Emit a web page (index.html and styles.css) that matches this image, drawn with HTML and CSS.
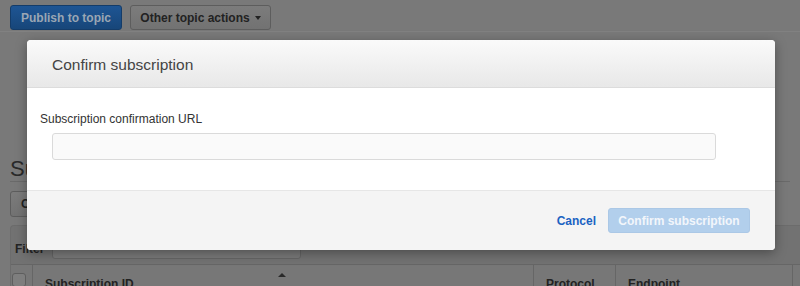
FILE: index.html
```html
<!DOCTYPE html>
<html>
<head>
<meta charset="utf-8">
<link rel="stylesheet" href="styles.css">
</head>
<body>
<div class="page">
  <div class="toolbar">
    <button class="btn btn-primary">Publish to topic</button>
    <button class="btn btn-default">Other topic actions <span class="caret"></span></button>
  </div>
  <div class="top-rule"></div>
  <h2 class="section-title">Subscriptions</h2>
  <div class="actions">
    <button class="btn btn-default">Create subscription</button>
  </div>
  <div class="panel">
    <div class="filter-row">
      <span class="filter-label">Filter</span>
      <span class="filter-input"></span>
    </div>
    <div class="table-head">
      <div class="th th-check"><span class="checkbox"></span></div>
      <div class="th th-id">Subscription ID<span class="sort"></span></div>
      <div class="th th-proto">Protocol</div>
      <div class="th th-end">Endpoint</div>
      <div class="th th-rest"></div>
    </div>
  </div>
</div>

<div class="modal">
  <div class="modal-header">
    <h3 class="modal-title">Confirm subscription</h3>
  </div>
  <div class="modal-body">
    <label class="field-label">Subscription confirmation URL</label>
    <input class="field-input" type="text">
  </div>
  <div class="modal-footer">
    <a class="link-cancel">Cancel</a>
    <button class="btn-confirm">Confirm subscription</button>
  </div>
</div>
</body>
</html>
```

FILE: styles.css
```css
* { box-sizing: border-box; }
html, body {
  margin: 0;
  padding: 0;
  width: 800px;
  height: 286px;
  overflow: hidden;
  background: #797979;
  font-family: "Liberation Sans", Arial, sans-serif;
}
.page {
  padding: 0 0 0 10px;
}
.toolbar {
  display: flex;
  gap: 8px;
  padding-top: 5px;
  height: 31px;
}
.btn {
  height: 25px;
  font-family: "Liberation Sans", Arial, sans-serif;
  font-size: 12px;
  font-weight: bold;
  border-radius: 3px;
  padding: 0 10px;
  display: inline-flex;
  align-items: center;
  gap: 5px;
  white-space: nowrap;
}
.btn-primary {
  width: 112px;
  justify-content: center;
  background: linear-gradient(#1e5594, #174679);
  border: 1px solid #143c69;
  color: #9aa6b4;
}
.btn-default {
  background: linear-gradient(#7c7c7c, #727272);
  border: 1px solid #5d5d5d;
  color: #222;
}
.toolbar .btn-default { width: 141px; justify-content: center; }
.caret {
  width: 0; height: 0;
  border-left: 3px solid transparent;
  border-right: 3px solid transparent;
  border-top: 4px solid #222;
}
.top-rule {
  height: 1px;
  background: #818181;
  margin-left: -10px;
}
.section-title {
  margin: 124px 10px 0 0;
  font-size: 22px;
  font-weight: normal;
  color: #2a2a2a;
  height: 26px;
  line-height: 26px;
  border-bottom: 1px solid #6a6a6a;
  padding-bottom: 0;
}
.actions {
  padding-top: 9px;
  height: 43px;
}
.actions .btn { height: 26px; }
.panel {
  margin-right: -10px;
  background: #727272;
  border-radius: 4px 0 0 0;
  border: 1px solid #6c6c6c;
  border-right: none;
}
.filter-row {
  display: flex;
  align-items: center;
  height: 34px;
  padding: 7px 0 0 4px;
  gap: 8px;
}
.filter-label {
  font-size: 12px;
  font-weight: bold;
  color: #242424;
  padding-top: 4px;
}
.filter-input {
  width: 249px;
  height: 25px;
  background: #7a7a7a;
  border: 1px solid #656565;
  border-radius: 3px;
}
.table-head {
  display: flex;
  height: 22px;
  margin-top: 4px;
  border-top: 1px solid #666;
  background: #777;
}
.th {
  font-size: 12px;
  font-weight: bold;
  color: #222;
  padding: 12px 0 0 12px;
  border-right: 1px solid #666;
  position: relative;
}
.th-check { width: 22px; padding: 8px 0 0 1px; }
.checkbox {
  display: block;
  width: 14px; height: 14px;
  border: 1px solid #5e5e5e;
  border-radius: 3px;
  background: #7e7e7e;
}
.th-id { width: 501px; }
.sort {
  position: absolute;
  left: 245px;
  top: 8px;
  width: 0; height: 0;
  border-left: 4px solid transparent;
  border-right: 4px solid transparent;
  border-bottom: 4px solid #2a2a2a;
}
.th-proto { width: 82px; }
.th-end { width: 177px; }
.th-rest { flex: 1; border-right: none; }

.modal {
  position: absolute;
  left: 27px;
  top: 40px;
  width: 748px;
  height: 210px;
  background: #fff;
  border-radius: 4px;
  box-shadow: 0 3px 12px rgba(0,0,0,0.35);
  overflow: hidden;
  display: flex;
  flex-direction: column;
}
.modal-header {
  height: 48px;
  background: linear-gradient(#fafafa, #e8e8e8);
  border-bottom: 1px solid #dcdcdc;
  display: flex;
  align-items: center;
  padding: 3px 0 0 25px;
}
.modal-title {
  margin: 0;
  font-size: 15.5px;
  font-weight: normal;
  color: #444;
}
.modal-body {
  height: 102px;
  padding: 24px 0 0 13px;
}
.field-label {
  display: block;
  font-size: 12px;
  color: #333;
  line-height: 14px;
}
.field-input {
  display: block;
  margin: 7px 0 0 12px;
  width: 664px;
  height: 27px;
  border: 1px solid #dadada;
  border-radius: 3px;
  background: #fafafa;
  outline: none;
}
.modal-footer {
  flex: 1;
  background: #f4f4f4;
  border-top: 1px solid #e6e6e6;
  display: flex;
  align-items: center;
  justify-content: flex-end;
  padding: 0 25px 0 0;
  gap: 12px;
}
.link-cancel {
  font-size: 12px;
  font-weight: bold;
  color: #1a62c2;
}
.btn-confirm {
  width: 142px;
  height: 25px;
  border: 1px solid #abc8e6;
  border-radius: 3px;
  background: #b2cfec;
  color: #f2f6fb;
  font-family: "Liberation Sans", Arial, sans-serif;
  font-size: 12px;
  font-weight: bold;
  padding: 0;
}
```
